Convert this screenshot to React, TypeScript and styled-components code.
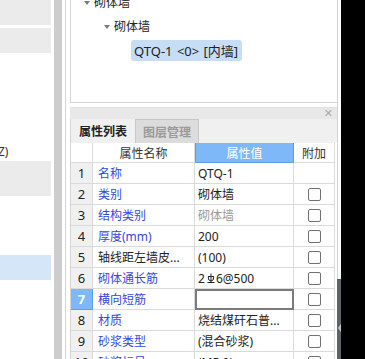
import React from "react";
import styled, { createGlobalStyle } from "styled-components";

const GlobalStyle = createGlobalStyle`
  html, body {
    margin: 0;
    padding: 0;
    background: #000;
  }
  body {
    font-family: "Noto Sans", "Noto Sans CJK SC", sans-serif;
    font-size: 12px;
    color: #222;
  }
`;

const Page = styled.div`
  display: flex;
  width: 365px;
  height: 359px;
  overflow: hidden;
  background: #000;
`;

const Sidebar = styled.div`
  width: 54px;
  flex: none;
  background: #fff;
  display: flex;
  flex-direction: column;
  overflow: hidden;
`;

const SideItem = styled.div<{ $tone?: "gray" | "blue"; $h: number; $gap?: number }>`
  flex: none;
  width: 51px;
  height: ${(p) => p.$h}px;
  margin-bottom: ${(p) => p.$gap ?? 0}px;
  background: ${(p) =>
    p.$tone === "gray" ? "#ebebeb" : p.$tone === "blue" ? "#d5e6f9" : "transparent"};
  display: flex;
  align-items: center;
  white-space: nowrap;
  font-size: 12px;
  color: #333;
`;

const Strip = styled.div`
  width: 8px;
  flex: none;
  background: #cdcdcd;
`;

const Workspace = styled.div`
  width: 279px;
  flex: none;
  background: #fff;
  padding-left: 3px;
  box-sizing: border-box;
  display: flex;
`;

const FrameEdge = styled.div`
  flex: 1;
  border-left: 1px solid #d4d4d4;
  padding-left: 4px;
  display: flex;
`;

const Panels = styled.div`
  width: 267px;
  flex: none;
  display: flex;
  flex-direction: column;
`;

const Gutter = styled.div`
  width: 4px;
  flex: none;
  display: flex;
  flex-direction: column;
`;

const GutterTrack = styled.div`
  flex: 1;
  border-left: 1px solid #d4d4d4;
`;

const GutterThumb = styled.div`
  height: 80px;
  background: #5d636b;
  display: flex;
  flex-direction: column;
  justify-content: center;
  align-items: center;
  padding-top: 18px;
  box-sizing: border-box;
`;

const ThumbArrow = styled.span`
  width: 0;
  height: 0;
  border-top: 4px solid transparent;
  border-bottom: 4px solid transparent;
  border-right: 3px solid #c4c6c9;
`;

/* ---------- tree ---------- */

const TreeBox = styled.div`
  height: 103px;
  flex: none;
  border-left: 1px solid #d4d4d4;
  border-bottom: 1px solid #d4d4d4;
  box-sizing: border-box;
  overflow: hidden;
  display: flex;
  flex-direction: column;
`;

const TreeRow = styled.div<{ $indent: number; $first?: boolean }>`
  height: 24px;
  flex: none;
  margin-top: ${(p) => (p.$first ? -10 : 0)}px;
  padding-left: ${(p) => p.$indent}px;
  display: flex;
  align-items: center;
  font-size: 12px;
  color: #222;
  white-space: nowrap;
`;

const Caret = styled.span`
  width: 0;
  height: 0;
  border-left: 3px solid transparent;
  border-right: 3px solid transparent;
  border-top: 4px solid #7a7a7a;
  margin-right: 4px;
  margin-top: 1px;
`;

const Selected = styled.span`
  height: 21px;
  display: inline-flex;
  align-items: center;
  padding: 0 4px 0 3px;
  background: #c6ddf5;
  border-radius: 3px;
  font-size: 13px;
  word-spacing: 1px;
`;

/* ---------- property panel ---------- */

const PanelBar = styled.div`
  margin-top: 4px;
  height: 11px;
  flex: none;
  background: #e8e8e8;
  border-top: 1px solid #e0e0e0;
  display: flex;
  justify-content: flex-end;
  align-items: center;
  padding-right: 4px;
`;

const CloseMark = styled.span`
  color: #a8a8a8;
  font-size: 11px;
  line-height: 1;
  font-family: "DejaVu Sans", sans-serif;
`;

const PropPanel = styled.div`
  flex: 1;
  border-left: 1px solid #d4d4d4;
  background: #fff;
  display: flex;
  flex-direction: column;
`;

const TabBar = styled.div`
  height: 24px;
  flex: none;
  background: #f0f0f0;
  display: flex;
  align-items: stretch;
`;

const Tab = styled.div<{ $active?: boolean }>`
  width: 64px;
  box-sizing: border-box;
  display: flex;
  align-items: center;
  justify-content: center;
  font-weight: bold;
  font-size: 12px;
  color: ${(p) => (p.$active ? "#222" : "#9a9a9a")};
  background: ${(p) => (p.$active ? "#f0f0f0" : "#dcdcdc")};
  border: ${(p) => (p.$active ? "none" : "1px solid #c8c8c8")};
  border-bottom: none;
`;

const Grid = styled.div`
  width: 264px;
  display: grid;
  grid-template-columns: 22px 102px 99px 41px;
  grid-auto-rows: 21px;
  grid-template-rows: 20px;
`;

const Cell = styled.div<{
  $kind?: "num" | "name" | "value" | "extra";
  $color?: string;
}>`
  box-sizing: border-box;
  border-right: 1px solid #dadada;
  border-bottom: 1px solid #dadada;
  display: flex;
  align-items: center;
  justify-content: ${(p) =>
    p.$kind === "num" || p.$kind === "extra" ? "center" : "flex-start"};
  padding-left: ${(p) => (p.$kind === "name" ? 5 : p.$kind === "value" ? 3 : 0)}px;
  background: ${(p) => (p.$kind === "num" ? "#f0f0f0" : "#fff")};
  color: ${(p) => p.$color ?? "#222"};
  font-size: ${(p) => (p.$kind === "num" ? 13 : 12)}px;
  white-space: nowrap;
  overflow: hidden;
`;

const HeadCell = styled.div<{ $hot?: boolean }>`
  box-sizing: border-box;
  display: flex;
  align-items: center;
  justify-content: center;
  font-size: 12px;
  color: ${(p) => (p.$hot ? "#fff" : "#333")};
  background: ${(p) => (p.$hot ? "#7fb8f8" : "#fff")};
  border-right: 1px solid ${(p) => (p.$hot ? "#5e9ee8" : "#dadada")};
  border-bottom: 1px solid ${(p) => (p.$hot ? "#5e9ee8" : "#dadada")};
  border-left: ${(p) => (p.$hot ? "1px solid #5e9ee8" : "none")};
`;

const NumHot = styled(Cell)`
  background: #7fb8f8;
  color: #fff;
  font-weight: bold;
  border-color: #5e9ee8;
`;

const EditCell = styled.div`
  box-sizing: border-box;
  border: 2px solid #7b7b7b;
  background: #fff;
`;

const Check = styled.span`
  width: 13px;
  height: 13px;
  box-sizing: border-box;
  border: 1px solid #707070;
  border-radius: 2px;
  background: #fff;
`;

const RebarSymbol = () => (
  <svg width="8" height="11" viewBox="0 0 8 11" style={{ margin: "0 1px 0 2px" }}>
    <g fill="none" stroke="#222" strokeWidth="1">
      <path d="M1 3.5 H7" />
      <path d="M4 0.5 V9" />
      <path d="M1.2 4 Q1.2 8 4 8 Q6.8 8 6.8 4" />
      <path d="M0.5 9.5 H7.5" />
    </g>
  </svg>
);

type Row = {
  n: string;
  name: string;
  value: React.ReactNode;
  nameColor?: string;
  valueColor?: string;
  check?: boolean;
  editing?: boolean;
};

const BLUE = "#3547e2";

const rows: Row[] = [
  { n: "1", name: "名称", value: "QTQ-1", check: false },
  { n: "2", name: "类别", value: "砌体墙", check: true },
  { n: "3", name: "结构类别", value: "砌体墙", valueColor: "#999", check: true },
  { n: "4", name: "厚度(mm)", value: "200", check: true },
  { n: "5", name: "轴线距左墙皮...", nameColor: "#222", value: "(100)", check: true },
  {
    n: "6",
    name: "砌体通长筋",
    value: (
      <>
        2<RebarSymbol />
        6@500
      </>
    ),
    check: true,
  },
  { n: "7", name: "横向短筋", value: "", check: true, editing: true },
  { n: "8", name: "材质", value: "烧结煤矸石普...", check: true },
  { n: "9", name: "砂浆类型", value: "(混合砂浆)", check: true },
  { n: "10", name: "砂浆标号", value: "(M5.0)", check: true },
];

export default function App() {
  return (
    <>
      <GlobalStyle />
      <Page>
        <Sidebar>
          <SideItem $tone="gray" $h={25} $gap={3} />
          <SideItem $tone="gray" $h={25} />
          <SideItem $h={88} />
          <SideItem $h={20}>
            <span style={{ marginLeft: -2 }}>Z)</span>
          </SideItem>
          <SideItem $tone="gray" $h={35} />
          <SideItem $h={59} />
          <SideItem $tone="blue" $h={25} />
        </Sidebar>
        <Strip />
        <Workspace>
          <FrameEdge>
            <Panels>
              <TreeBox>
                <TreeRow $indent={13} $first>
                  <Caret />
                  砌体墙
                </TreeRow>
                <TreeRow $indent={33}>
                  <Caret />
                  砌体墙
                </TreeRow>
                <TreeRow $indent={60}>
                  <Selected>QTQ-1 &lt;0&gt; [内墙]</Selected>
                </TreeRow>
              </TreeBox>
              <PanelBar>
                <CloseMark>✕</CloseMark>
              </PanelBar>
              <PropPanel>
                <TabBar>
                  <Tab $active>属性列表</Tab>
                  <Tab>图层管理</Tab>
                </TabBar>
                <Grid>
                  <HeadCell />
                  <HeadCell>属性名称</HeadCell>
                  <HeadCell $hot>属性值</HeadCell>
                  <HeadCell>附加</HeadCell>
                  {rows.map((r) => (
                    <React.Fragment key={r.n}>
                      {r.editing ? (
                        <NumHot $kind="num">{r.n}</NumHot>
                      ) : (
                        <Cell $kind="num">{r.n}</Cell>
                      )}
                      <Cell $kind="name" $color={r.nameColor ?? BLUE}>
                        {r.name}
                      </Cell>
                      {r.editing ? (
                        <EditCell />
                      ) : (
                        <Cell $kind="value" $color={r.valueColor}>
                          {r.value}
                        </Cell>
                      )}
                      <Cell $kind="extra">{r.check && <Check />}</Cell>
                    </React.Fragment>
                  ))}
                </Grid>
              </PropPanel>
            </Panels>
            <Gutter>
              <GutterTrack />
              <GutterThumb>
                <ThumbArrow />
              </GutterThumb>
            </Gutter>
          </FrameEdge>
        </Workspace>
      </Page>
    </>
  );
}
